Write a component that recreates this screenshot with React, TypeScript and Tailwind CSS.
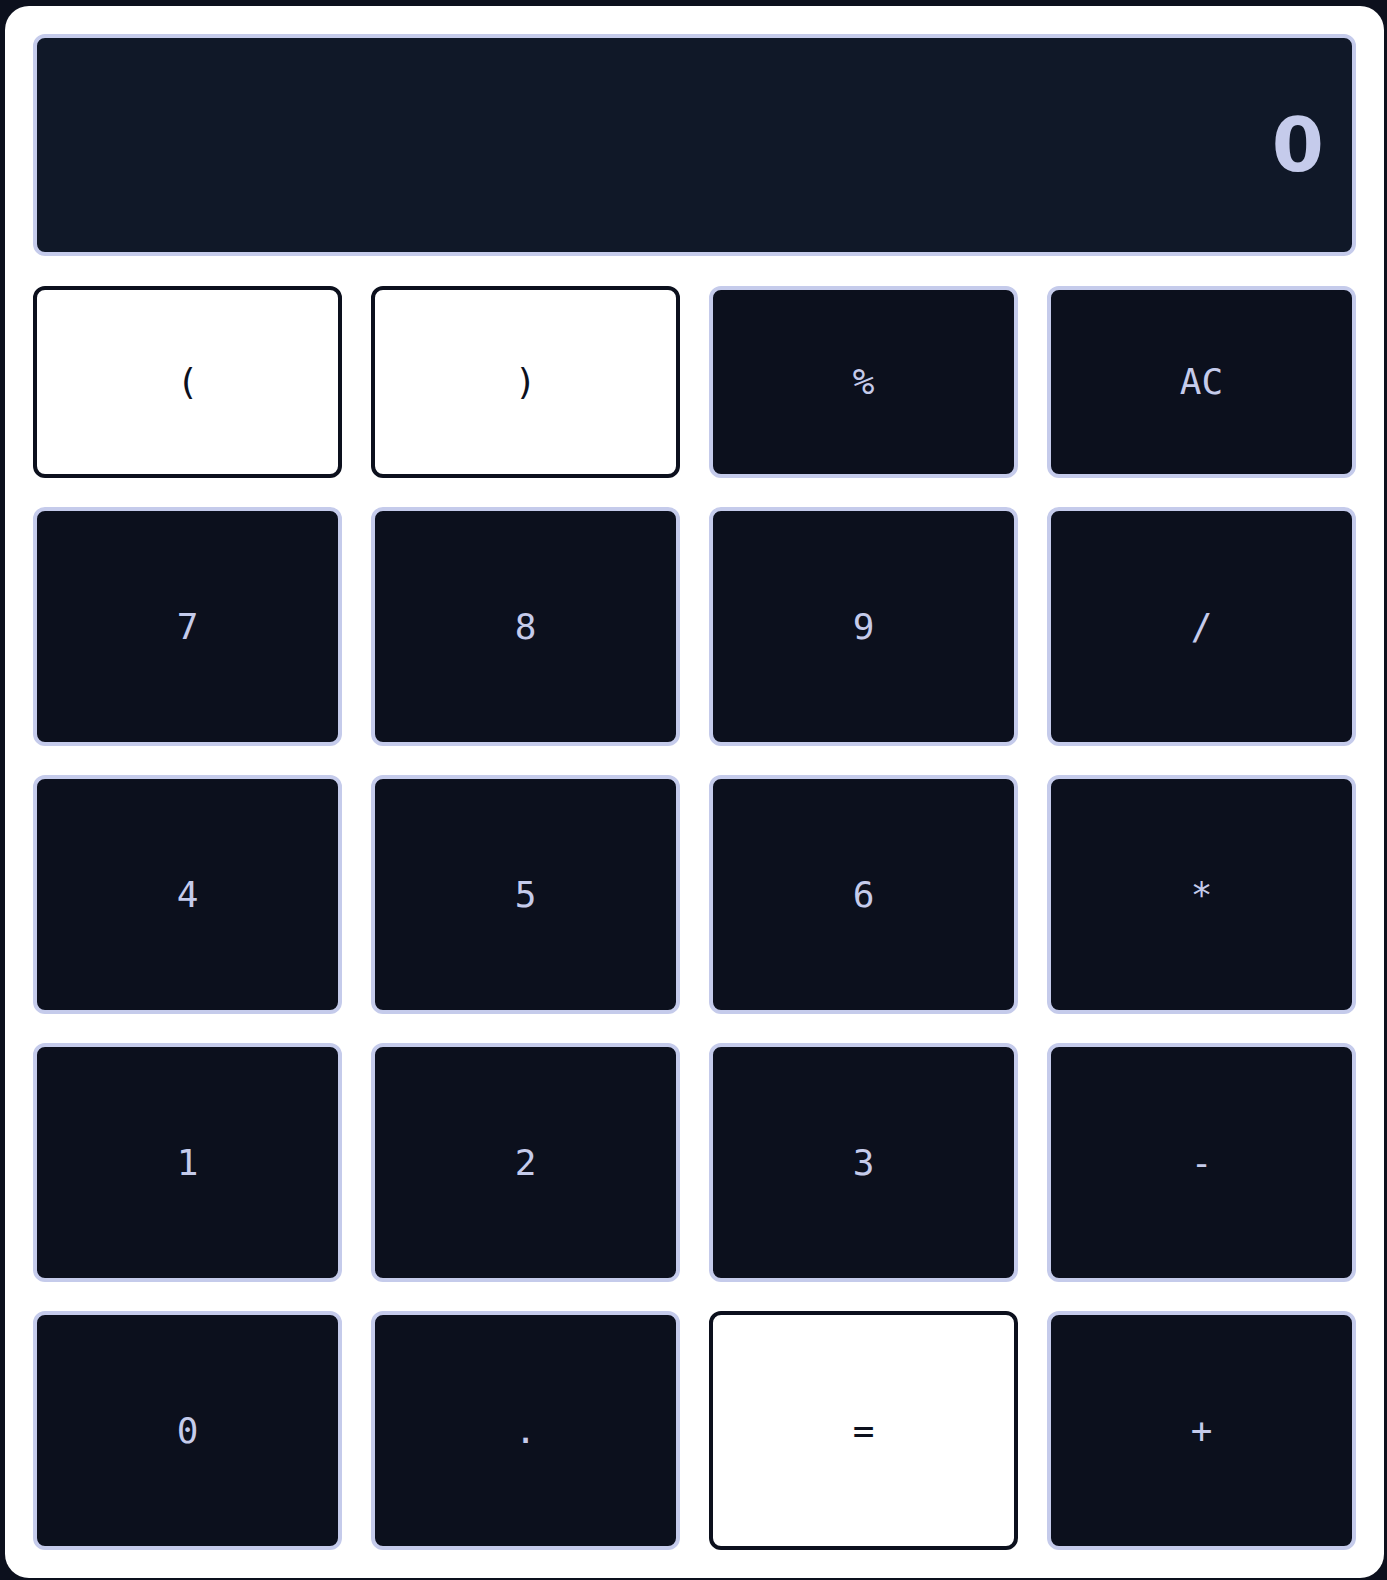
import React from 'react'

type Key = { label: string; light?: boolean }

const keys: Key[] = [
  { label: '(', light: true },
  { label: ')', light: true },
  { label: '%' },
  { label: 'AC' },
  { label: '7' },
  { label: '8' },
  { label: '9' },
  { label: '/' },
  { label: '4' },
  { label: '5' },
  { label: '6' },
  { label: '*' },
  { label: '1' },
  { label: '2' },
  { label: '3' },
  { label: '-' },
  { label: '0' },
  { label: '.' },
  { label: '=', light: true },
  { label: '+' },
]

function CalcKey({ label, light }: Key) {
  return (
    <button
      className={
        light
          ? 'flex items-center justify-center rounded-xl border-4 border-[#0c101d] bg-white text-[36px] text-[#0c101d]'
          : 'flex items-center justify-center rounded-xl border-4 border-[#c5cbeb] bg-[#0c101d] text-[36px] text-[#c5cbeb]'
      }
      style={{ fontFamily: '"DejaVu Sans Mono", "Liberation Mono", monospace' }}
    >
      {label}
    </button>
  )
}

export default function App() {
  return (
    <div className="min-h-screen bg-[#0c101d] pl-[5px] pr-[3px] pt-[6px] pb-[3px]">
      <div className="rounded-3xl bg-white p-7">
        {/* Display */}
        <div className="flex h-[222px] items-center justify-end rounded-xl border-4 border-[#c5cbeb] bg-[#101828] px-7">
          <span
            className="text-[75px] font-bold leading-none text-[#c5cbeb]"
            style={{ fontFamily: '"DejaVu Sans", sans-serif' }}
          >
            0
          </span>
        </div>

        {/* Keypad */}
        <div className="mt-[30px] grid grid-cols-4 grid-rows-[192px_239px_239px_239px_239px] gap-x-[29px] gap-y-[29px]">
          {keys.map((k) => (
            <CalcKey key={k.label} label={k.label} light={k.light} />
          ))}
        </div>
      </div>
    </div>
  )
}
